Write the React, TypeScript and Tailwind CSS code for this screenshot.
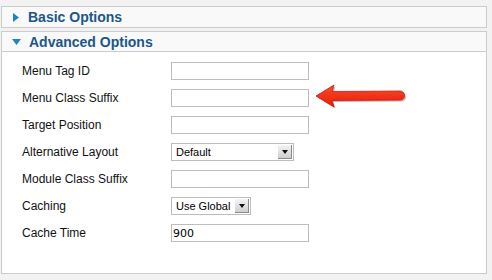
export default function App() {
  const rows = [
    { label: 'Menu Tag ID', kind: 'input', value: '' },
    { label: 'Menu Class Suffix', kind: 'input', value: '' },
    { label: 'Target Position', kind: 'input', value: '' },
    { label: 'Alternative Layout', kind: 'select', value: 'Default', width: 'w-[123px]' },
    { label: 'Module Class Suffix', kind: 'input', value: '' },
    { label: 'Caching', kind: 'select', value: 'Use Global', width: 'w-[80px]' },
    { label: 'Cache Time', kind: 'input', value: '900' },
  ];

  return (
    <div className="w-[492px] h-[280px] bg-[#f2f2f2] pt-[6px] pl-[1px] font-['Liberation_Sans',Arial,sans-serif]">
      {/* collapsed section */}
      <div className="w-[486px] h-[22px] border border-[#cccccc] bg-[#f9f9f9] flex items-center">
        <svg width="6" height="9" viewBox="0 0 6 9" className="ml-[11px] mr-[9px]">
          <path d="M0 0 L6 4.5 L0 9 Z" fill="#1a87c2" />
        </svg>
        <span className="text-[14px] font-bold text-[#1b5788] leading-none">Basic Options</span>
      </div>

      {/* expanded section */}
      <div className="relative w-[486px] h-[243px] mt-[3px] border border-[#cccccc] bg-white">
        <div className="h-[20px] border-b border-[#cccccc] bg-[#f9f9f9] flex items-center">
          <svg width="9" height="6" viewBox="0 0 9 6" className="ml-[10px] mr-[8px]">
            <path d="M0 0 L9 0 L4.5 6 Z" fill="#1a87c2" />
          </svg>
          <span className="text-[14px] font-bold text-[#1b5788] leading-none">Advanced Options</span>
        </div>

        <div className="pt-[10px] pl-[20px] flex flex-col gap-[9px]">
          {rows.map((row) => (
            <div key={row.label} className="flex items-center h-[18px]">
              <div className="w-[149px] text-[12px] text-[#111] leading-none">{row.label}</div>
              {row.kind === 'input' ? (
                <div className="w-[138px] h-[18px] border border-[#bdbdbd] bg-white flex items-center pl-[1px] text-[11px] text-black font-['DejaVu_Sans',sans-serif] leading-none">
                  {row.value}
                </div>
              ) : (
                <div className={`${row.width} h-[18px] border border-[#bdbdbd] bg-white flex items-center`}>
                  <span className="flex-1 pl-[4px] whitespace-nowrap text-[11px] text-black leading-none">
                    {row.value}
                  </span>
                  <div className="w-[14px] h-[14px] mr-[1px] bg-gradient-to-b from-[#f4f4f4] to-[#cfcfcf] border-r border-b border-[#8a8a8a] flex items-center justify-center">
                    <svg width="6" height="4" viewBox="0 0 6 4">
                      <path d="M0 0 L6 0 L3 4 Z" fill="#111" />
                    </svg>
                  </div>
                </div>
              )}
            </div>
          ))}
        </div>

        {/* annotation arrow */}
        <svg
          className="absolute left-[312px] top-[52px]"
          width="96"
          height="28"
          viewBox="0 0 96 28"
        >
          <defs>
            <linearGradient id="arrowFill" x1="0" y1="0" x2="0" y2="1">
              <stop offset="0" stopColor="#ff4a2a" />
              <stop offset="1" stopColor="#e01e0c" />
            </linearGradient>
          </defs>
          <path
            d="M2 12 L20 1 L18 7.5 L86 7 A4.5 4.5 0 0 1 86 16 L18 16.5 L20 23 Z"
            fill="#7a1a10"
            opacity="0.35"
            transform="translate(1.5 1.5)"
          />
          <path
            d="M2 12 L20 1 L18 7.5 L86 7 A4.5 4.5 0 0 1 86 16 L18 16.5 L20 23 Z"
            fill="url(#arrowFill)"
            stroke="#c51a08"
            strokeWidth="0.8"
            strokeLinejoin="round"
          />
        </svg>
      </div>
    </div>
  );
}
